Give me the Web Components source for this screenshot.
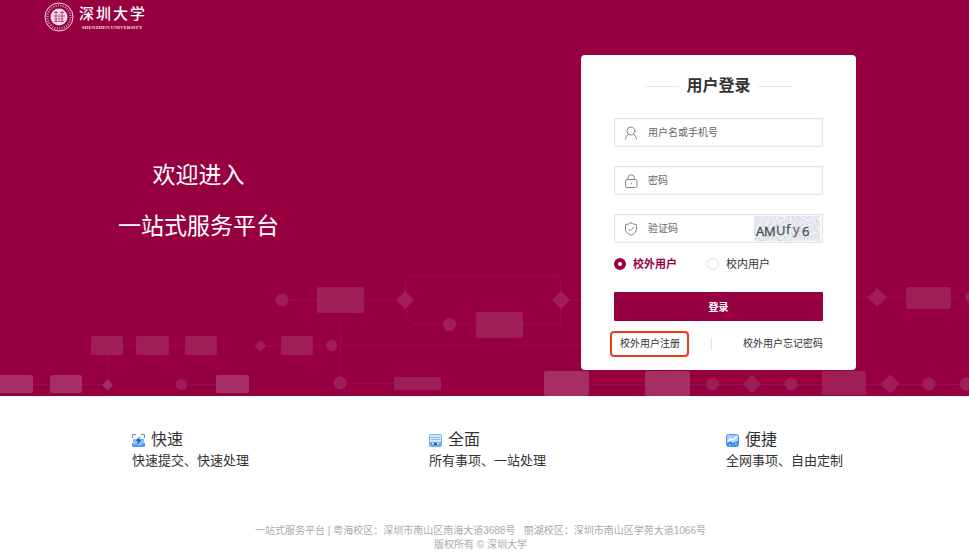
<!DOCTYPE html>
<html lang="zh-CN">
<head>
<meta charset="utf-8">
<meta name="viewport" content="width=device-width, initial-scale=1">
<title>一站式服务平台</title>
<style>
    body {
        margin: 0;
        background: #fff;
        color: #333;
        font-family: "Liberation Sans", "Noto Sans CJK SC", sans-serif;
        --brand: #960041;
    }
    .features {
        display: flex;
        justify-content: space-between;
        padding: 32px 126px 54px 132px;
    }
</style>
</head>
<body>
<portal-hero>
    <portal-logo slot="logo"></portal-logo>
    <span slot="line1">欢迎进入</span>
    <span slot="line2">一站式服务平台</span>
    <login-card></login-card>
</portal-hero>
<main class="features">
    <feature-item>
        <svg slot="icon" viewBox="0 0 13 13">
            <rect x="1" y="5" width="11" height="8" fill="#8fbff5"/>
            <path d="M.5 4V.5H4M9 .5h3.500V4M.5 9v3.500H4M9 12.500h3.500V9" fill="none" stroke="#4a93ea"/>
            <path d="M8 2 3.500 7h2.500l-1 4L10 5.500H7z" fill="#1766c9"/>
            <path d="M1 11l3-1 3 2 5-3v4H1z" fill="#4f9bee"/>
        </svg>
        <span slot="title">快速</span>
        快速提交、快速处理
    </feature-item>
    <feature-item>
        <svg slot="icon" viewBox="0 0 13 13">
            <rect x=".5" y=".5" width="12" height="12" rx="1" fill="#d5e8fc" stroke="#74aff1"/>
            <path d="M2 3.500h9M2 5.500h9" stroke="#8bbdf5"/>
            <path d="M1 8h11v4H1z" fill="#6aaaf0"/>
            <path d="M3 9.500h2M8 9.500h2" stroke="#fff"/>
            <path d="M5 9h3v2H5z" fill="#1463bf"/>
        </svg>
        <span slot="title">全面</span>
        所有事项、一站处理
    </feature-item>
    <feature-item>
        <svg slot="icon" viewBox="0 0 13 13">
            <rect x=".5" y=".5" width="12" height="12" rx="2" fill="#a9d0fa" stroke="#4b94e8"/>
            <path d="M2 7.500 4.500 5 7 6l4-3.500" fill="none" stroke="#fff" stroke-width="1.500"/>
            <path d="M1 9l3-1.500L7 9l5-2v5H1z" fill="#3989e4"/>
            <path d="M3 11h2M6.500 11h1M9 10h2" stroke="#d7eaff"/>
        </svg>
        <span slot="title">便捷</span>
        全网事项、自由定制
    </feature-item>
</main>
<portal-footer>
    <span slot="address">一站式服务平台 | 粤海校区：深圳市南山区南海大道3688号&nbsp;&nbsp; 丽湖校区：深圳市南山区学苑大道1066号</span>
    版权所有 © 深圳大学
</portal-footer>

<script>
class PortalLogo extends HTMLElement {
    constructor() {
        super();
        this.attachShadow({ mode: 'open' });
        this.shadowRoot.innerHTML = `
            <style>
                :host {
                    display: flex;
                    align-items: center;
                    gap: 5px;
                    color: #f6dde7;
                }
                svg { width: 30px; height: 30px; flex: none; }
                .name {
                    display: flex;
                    gap: 2px;
                    font-size: 15px;
                    line-height: 20px;
                    font-weight: 500;
                    color: #fff;
                }
                .en {
                    font: bold 5px/7px "Liberation Serif", serif;
                    text-align: center;
                    white-space: nowrap;
                }
            </style>
            <svg viewBox="0 0 30 30" fill="none" stroke="currentColor">
                <circle cx="15" cy="15" r="14" stroke-width="1"/>
                <circle cx="15" cy="15" r="11.500" stroke-width="2" stroke-dasharray="1 1.400" opacity=".7"/>
                <circle cx="15" cy="15" r="8.500" fill="currentColor" stroke="none"/>
                <path d="M10 10.500h4M16 10.500h4M9.500 14h4M16 14h5M10 19.500h4M16 19.500h4M12 9v11M18 9v11M15 12v8M10.500 17h3M16.500 17h3" stroke="#b0386c" stroke-width=".9"/>
            </svg>
            <div>
                <div class="name"><span>深</span><span>圳</span><span>大</span><span>学</span></div>
                <div class="en">SHENZHEN UNIVERSITY</div>
            </div>
        `;
    }
}

class PortalHero extends HTMLElement {
    constructor() {
        super();
        this.attachShadow({ mode: 'open' });
        this.shadowRoot.innerHTML = `
            <style>
                :host {
                    display: grid;
                    background: var(--brand);
                    color: #fff;
                }
                .backdrop, .content { grid-area: 1 / 1; min-width: 0; }
                .backdrop { position: relative; overflow: hidden; }
                .backdrop svg {
                    position: absolute;
                    inset: 0;
                    width: 100%;
                    height: 100%;
                }
                .content { position: relative; }
                header { display: flex; padding: 2px 44px; }
                .row {
                    display: flex;
                    justify-content: space-between;
                    align-items: flex-start;
                    padding: 21px 113px 26px 118px;
                }
                h1 {
                    margin: 95px 0 0;
                    font-size: 23px;
                    line-height: 51px;
                    font-weight: 400;
                    text-align: center;
                }
                h1 ::slotted(span), h1 slot { display: block; }
            </style>
            <div class="backdrop">
                <svg viewBox="0 0 969 396" preserveAspectRatio="xMidYMax slice" aria-hidden="true">
                    <g fill="none" stroke="#fff" stroke-opacity=".05">
                        <path d="M288 300.500h29M364 300.500h32M405.500 291v-8q0-7 7-7h142q6 0 6 7v9M405.500 309q2 15 12 15.500h26M456 324.500h20M523 324.500h37.500V309M570 300.500h20"/>
                        <path d="M123 345.500h13M169 345.500h16M266 345.500h15M313 345.500h13M337 345.500h250M107.500 355v24M340.500 320v57"/>
                        <path d="M33 384.500h17M82 384.500h20M187 384.500h29M346 383.500h48M589 384.500h56M690 384.500h16M719 384.500h24M761 384.500h24M797 384.500h25M866 384.500h15M899 384.500h24M935 384.500h25"/>
                        <path d="M856 297.500h12M886 297.500h20M951 297.500h15"/>
                    </g>
                    <g fill="#e0d8dc" fill-opacity=".14">
                        <rect x="317" y="287" width="47" height="26" rx="2"/>
                        <rect x="476" y="312" width="47" height="26" rx="2"/>
                        <rect x="91" y="336" width="32" height="19" rx="2"/>
                        <rect x="136" y="336" width="33" height="19" rx="2"/>
                        <rect x="185" y="336" width="32" height="19" rx="2"/>
                        <rect x="281" y="336" width="32" height="19" rx="2"/>
                        <rect x="906" y="287" width="45" height="22" rx="2"/>
                        <rect x="822" y="371" width="44" height="24" rx="2"/>
                        <rect x="394" y="377" width="47" height="13" rx="2"/>
                        <circle cx="282" cy="300" r="6.500"/>
                        <circle cx="449.500" cy="324.500" r="6.500"/>
                        <circle cx="331.500" cy="345.500" r="5.500"/>
                        <circle cx="340" cy="383" r="6.500"/>
                        <circle cx="181.500" cy="384.500" r="5.500"/>
                        <circle cx="712.500" cy="384" r="6.500"/>
                        <circle cx="791" cy="384" r="6.500"/>
                        <circle cx="929" cy="384" r="6.500"/>
                        <circle cx="966" cy="384" r="6.500"/>
                        <circle cx="972" cy="297" r="6.500"/>
                        <path d="M405 291l9 9-9 9-9-9zM561 291l9 9-9 9-9-9zM260.500 340l6 6-6 6-6-6zM877 288l9.500 9.500-9.500 9.500-9.500-9.500zM752 374.500l9.500 9.500-9.500 9.500-9.500-9.500zM890 374.500l9.500 9.500-9.500 9.500-9.500-9.500z"/>
                    </g>
                    <g fill="#e0d8dc" fill-opacity=".21">
                        <rect x="-2" y="375" width="35" height="18" rx="2"/>
                        <rect x="50" y="375" width="32" height="18" rx="2"/>
                        <rect x="216" y="375" width="33" height="18" rx="2"/>
                        <rect x="544" y="371" width="45" height="25" rx="2"/>
                        <rect x="645" y="371" width="45" height="25" rx="2"/>
                        <path d="M107.500 379.500l5.500 5.500-5.500 5.500-5.500-5.500z"/>
                    </g>
                </svg>
            </div>
            <div class="content">
                <header><slot name="logo"></slot></header>
                <div class="row">
                    <h1><slot name="line1"></slot><slot name="line2"></slot></h1>
                    <slot></slot>
                </div>
            </div>
        `;
    }
}

class LoginField extends HTMLElement {
    constructor() {
        super();
        this.attachShadow({ mode: 'open' });
        this.shadowRoot.innerHTML = `
            <style>
                :host {
                    display: flex;
                    align-items: center;
                    box-sizing: border-box;
                    height: 29px;
                    padding: 0 2px 0 9px;
                    border: 1px solid #e4e4e4;
                    box-shadow: inset 0 0 0 1px #f7f7f7;
                }
                label { display: flex; flex: none; margin-right: 10px; }
                input {
                    flex: 1;
                    min-width: 0;
                    padding: 0;
                    border: 0;
                    outline: 0;
                    background: none;
                    color: #333;
                    font: inherit;
                    font-size: 10px;
                }
                input::placeholder { color: #666; opacity: 1; }
            </style>
            <label for="control"><slot name="icon"></slot></label>
            <input id="control">
            <slot></slot>
        `;
    }

    connectedCallback() {
        const input = this.shadowRoot.querySelector('input');
        const hint = this.getAttribute('hint');
        input.type = this.getAttribute('type') || 'text';
        input.placeholder = hint;
        input.setAttribute('aria-label', hint);
    }
}

class CaptchaImage extends HTMLElement {
    constructor() {
        super();
        this.attachShadow({ mode: 'open' });
        this.shadowRoot.innerHTML = `
            <style>
                :host { display: block; flex: none; }
                svg { display: block; width: 66px; height: 25px; }
                text { font-family: "Open Sans", sans-serif; font-size: 13px; }
            </style>
            <svg viewBox="0 0 66 25">
                <filter id="grain" x="0" y="0" width="1" height="1">
                    <feTurbulence type="fractalNoise" baseFrequency=".5" numOctaves="2" seed="4"/>
                    <feColorMatrix values=".8 0 0 0 .4  0 .8 0 0 .4  0 0 .8 0 .47  0 0 0 0 1"/>
                </filter>
                <rect width="66" height="25" filter="url(#grain)"/>
                <g stroke-width=".3">
                    <text x="2" y="20" fill="#33504a" stroke="#33504a">A</text>
                    <text x="10" y="20" fill="#45494a" stroke="#45494a">M</text>
                    <text x="22" y="19" fill="#41624f" stroke="#41624f">U</text>
                    <text x="32" y="18" fill="#4c5a48" stroke="#4c5a48">f</text>
                    <text x="39" y="18" fill="#6a6b50" stroke="#6a6b50">y</text>
                    <text x="48" y="20" fill="#3d5268" stroke="#3d5268">6</text>
                </g>
            </svg>
        `;
    }
}

class LoginCard extends HTMLElement {
    constructor() {
        super();
        this.attachShadow({ mode: 'open' });
        this.shadowRoot.innerHTML = `
            <style>
                :host {
                    display: block;
                    box-sizing: border-box;
                    width: 275px;
                    padding: 20px 33px 13px;
                    border-radius: 4px;
                    background: #fff;
                    color: #333;
                }
                form { margin: 0; }
                h2 {
                    display: flex;
                    align-items: center;
                    justify-content: center;
                    gap: 7px;
                    margin: 0 0 21px;
                    font-size: 16px;
                    line-height: 22px;
                }
                h2::before, h2::after {
                    content: "";
                    width: 34px;
                    height: 1px;
                    background: #e6e8ea;
                }
                .fields {
                    display: grid;
                    grid-template-columns: minmax(0, 1fr);
                    gap: 19px;
                }
                .icon {
                    width: 14px;
                    height: 14px;
                    fill: none;
                    stroke: #8a8a8a;
                    stroke-linecap: round;
                    stroke-linejoin: round;
                }
                .kinds {
                    display: flex;
                    gap: 30px;
                    margin: 12px 0 19px;
                    font-size: 11px;
                    line-height: 18px;
                }
                .kinds label { display: flex; align-items: center; gap: 7px; }
                .kinds input {
                    appearance: none;
                    box-sizing: border-box;
                    width: 12px;
                    height: 12px;
                    margin: 0;
                    border: 1px solid #dcdfe6;
                    border-radius: 50%;
                    background: #fff;
                }
                .kinds input:checked { border: 4px solid var(--brand); }
                .kinds input:checked + span { color: var(--brand); font-weight: 700; }
                button {
                    display: block;
                    width: 100%;
                    height: 29px;
                    padding: 0;
                    border: 0;
                    border-radius: 1px;
                    background: var(--brand);
                    color: #fff;
                    font: inherit;
                    font-size: 10px;
                    font-weight: 700;
                }
                nav {
                    display: flex;
                    align-items: center;
                    margin: 10px 0 0 -4px;
                    font-size: 10px;
                    line-height: 22px;
                }
                a { color: #333; text-decoration: none; white-space: nowrap; }
                .register {
                    padding: 0 7px 0 8px;
                    border: 2px solid #f23a16;
                    border-radius: 4px;
                }
                .divider { width: 1px; height: 12px; margin-left: 22px; background: #e2e2e2; }
                .forgot { margin-left: auto; }
            </style>
            <form>
                <h2>用户登录</h2>
                <div class="fields">
                    <login-field hint="用户名或手机号">
                        <svg slot="icon" class="icon" viewBox="0 0 14 14">
                            <circle cx="7" cy="5" r="4"/>
                            <path d="M1.500 13c.2-2.200 1.500-3.900 3.300-4.700M12.500 13c-.2-2.200-1.500-3.900-3.300-4.700"/>
                        </svg>
                    </login-field>
                    <login-field hint="密码" type="password">
                        <svg slot="icon" class="icon" viewBox="0 0 14 14">
                            <rect x="1.500" y="5.500" width="11.500" height="8" rx="1.500"/>
                            <path d="M4 5.500V4a3.200 3.200 0 0 1 6.400 0v1.500M7.200 9v1"/>
                        </svg>
                    </login-field>
                    <login-field hint="验证码">
                        <svg slot="icon" class="icon" viewBox="0 0 14 14">
                            <path d="M7 .8C5.500 2 3.500 2.500 1.500 2.500V7c0 3 2.500 5 5.500 6.200C10 12 12.500 10 12.500 7V2.500C10.500 2.500 8.500 2 7 .8z"/>
                            <path d="M4.300 6.800 6.300 8.800 9.800 5.300"/>
                        </svg>
                        <captcha-image></captcha-image>
                    </login-field>
                </div>
                <div class="kinds">
                    <label><input type="radio" name="kind" value="outside" checked><span>校外用户</span></label>
                    <label><input type="radio" name="kind" value="inside"><span>校内用户</span></label>
                </div>
                <button type="submit">登录</button>
                <nav>
                    <a class="register" href="#register">校外用户注册</a>
                    <span class="divider"></span>
                    <a class="forgot" href="#forgot">校外用户忘记密码</a>
                </nav>
            </form>
        `;
    }

    connectedCallback() {
        this.shadowRoot.querySelector('form').addEventListener('submit', (e) => e.preventDefault());
    }
}

class FeatureItem extends HTMLElement {
    constructor() {
        super();
        this.attachShadow({ mode: 'open' });
        this.shadowRoot.innerHTML = `
            <style>
                :host { display: block; font-size: 13px; line-height: 18px; }
                h3 {
                    display: flex;
                    align-items: center;
                    gap: 6px;
                    margin: 0;
                    font-size: 16px;
                    line-height: 24px;
                    font-weight: 400;
                }
                ::slotted(svg) { width: 13px; height: 13px; }
            </style>
            <h3><slot name="icon"></slot><slot name="title"></slot></h3>
            <slot></slot>
        `;
    }
}

class PortalFooter extends HTMLElement {
    constructor() {
        super();
        this.attachShadow({ mode: 'open' });
        this.shadowRoot.innerHTML = `
            <style>
                :host {
                    display: block;
                    padding: 0 8px 7px 0;
                    color: #aaa;
                    font-size: 10px;
                    line-height: 14px;
                    text-align: center;
                }
            </style>
            <div><slot name="address"></slot></div>
            <div><slot></slot></div>
        `;
    }
}

customElements.define('portal-logo', PortalLogo);
customElements.define('portal-hero', PortalHero);
customElements.define('login-field', LoginField);
customElements.define('captcha-image', CaptchaImage);
customElements.define('login-card', LoginCard);
customElements.define('feature-item', FeatureItem);
customElements.define('portal-footer', PortalFooter);
</script>
</body>
</html>
